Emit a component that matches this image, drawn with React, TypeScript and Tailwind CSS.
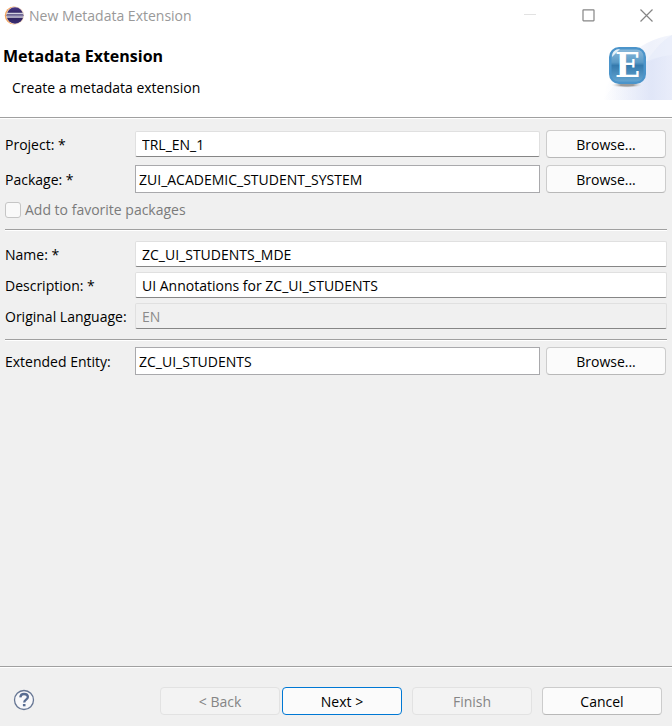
import { InputHTMLAttributes, ReactNode, useState } from "react";

const FIELD = "min-w-0 flex-1 text-black outline-none";
const NATIVE = "h-[26px] rounded-xs border border-[#e0e0e0] border-b-[#868686] bg-white px-1.5";
const BOXED = "h-7 border border-[#a9a9ac] bg-white px-[3px]";

interface FieldRowProps extends InputHTMLAttributes<HTMLInputElement> {
  id: string;
  label: string;
  boxed?: boolean;
  browse?: boolean;
}

function FieldRow({ id, label, boxed, browse, ...rest }: FieldRowProps) {
  return (
    <div className="flex items-center">
      <label htmlFor={id} className="w-[130px] shrink-0 pt-0.5 whitespace-nowrap">
        {label}
      </label>
      <input
        id={id}
        type="text"
        className={`${FIELD} ${boxed ? BOXED : NATIVE} disabled:bg-[#f0f0f0] disabled:text-[#8a8a8a]`}
        {...rest}
      />
      {browse && (
        <div className="ml-1.5 mr-px flex">
          <DialogButton>Browse...</DialogButton>
        </div>
      )}
    </div>
  );
}

function DialogButton({ children, primary, disabled }: { children: ReactNode; primary?: boolean; disabled?: boolean }) {
  return (
    <button
      type="button"
      disabled={disabled}
      className={`h-7 w-[120px] rounded-[4px] border pt-0.5 ${
        primary
          ? "border-[#0078d4] bg-[#fbfbfb] text-black"
          : disabled
            ? "border-[#e2e2e2] bg-[#f3f3f3] text-[#858585]"
            : "border-[#cccccc] border-b-[#b8b8b8] bg-[#fbfbfb] text-black"
      }`}
    >
      {children}
    </button>
  );
}

function Separator() {
  return <hr className="h-0.5 border-t border-b border-t-[#a0a0a0] border-b-white" />;
}

function EclipseLogo() {
  return (
    <svg width="20" height="20" viewBox="0 0 20 20" aria-hidden="true">
      <defs>
        <linearGradient id="orb" x1="0" x2="0" y1="0" y2="1">
          <stop offset="0" stopColor="#473788" />
          <stop offset="0.5" stopColor="#2c2255" />
          <stop offset="1" stopColor="#3a2d75" />
        </linearGradient>
      </defs>
      <circle cx="9.800" cy="9.500" r="9" fill="#f3a259" />
      <circle cx="11.200" cy="9.500" r="8.900" fill="#fbe3cd" />
      <circle cx="11" cy="9.500" r="8.300" fill="url(#orb)" />
      <path d="M2.500 7.500h17M2.500 11h17" stroke="#d3d1e0" strokeWidth="1.500" />
      <path d="M2.500 9.250h17" stroke="#7f78a3" strokeWidth="1.600" />
    </svg>
  );
}

function BannerImage() {
  return (
    <svg width="72" height="66" viewBox="0 0 72 66" aria-hidden="true">
      <defs>
        <linearGradient id="swoosh" x1="0" x2="1" y1="0" y2="0">
          <stop offset="0" stopColor="#dfe5f7" stopOpacity="0" />
          <stop offset="0.7" stopColor="#dae1f6" />
          <stop offset="1" stopColor="#e4e9f9" />
        </linearGradient>
        <linearGradient id="tile" x1="0" x2="0" y1="0" y2="1">
          <stop offset="0" stopColor="#8bb9da" />
          <stop offset="0.4" stopColor="#5b9ac6" />
          <stop offset="0.5" stopColor="#357aad" />
          <stop offset="1" stopColor="#64a4d0" />
        </linearGradient>
        <radialGradient id="shadow">
          <stop offset="0.4" stopColor="#9b9b9b" />
          <stop offset="1" stopColor="#ffffff" stopOpacity="0" />
        </radialGradient>
      </defs>
      <path d="M3 66C7 36 37 6 72 1v65z" fill="url(#swoosh)" opacity="0.45" />
      <path d="M3 66C20 40 42 24 72 21v45z" fill="url(#swoosh)" opacity="0.7" />
      <path d="M44 31C53 18 61 7 72 1v20c-10 1-19 5-28 10z" fill="#e4e9f9" opacity="0.5" />
      <ellipse cx="27" cy="51" rx="17" ry="3" fill="url(#shadow)" />
      <rect x="9" y="13" width="37" height="37" rx="10" fill="#4b94ca" />
      <rect x="11.500" y="15.500" width="32" height="32" rx="7" fill="url(#tile)" />
      <path d="M12 23c0-5 3-8 8-8l-4 4z" fill="#e6f1f8" />
      <text
        x="27.500"
        y="43"
        textAnchor="middle"
        fill="#fff"
        fontSize="33"
        fontWeight="700"
        className="font-['DejaVu_Serif',serif]"
      >
        E
      </text>
    </svg>
  );
}

export default function App() {
  const [favorite, setFavorite] = useState(false);

  return (
    <div className="flex min-h-screen flex-col bg-[#f0f0f0] font-['Open_Sans','Noto_Sans',sans-serif] text-[14px] leading-5 text-black">
      <header className="bg-white">
        <div className="flex h-[31px] items-center pl-1">
          <EclipseLogo />
          <span className="ml-[5px] flex-1 text-[#999999]">New Metadata Extension</span>
          <button type="button" aria-label="Minimize" disabled className="flex w-[52px] justify-center">
            <svg width="13" height="13" viewBox="0 0 13 13" stroke="#e2e2e2" aria-hidden="true">
              <path d="M0 5.500h12" />
            </svg>
          </button>
          <button type="button" aria-label="Maximize" className="flex w-16 justify-center">
            <svg width="13" height="13" viewBox="0 0 13 13" fill="none" stroke="#858585" aria-hidden="true">
              <rect x="1" y="0.800" width="11" height="11" rx="0.5" strokeWidth="1.200" />
            </svg>
          </button>
          <button type="button" aria-label="Close" className="flex w-[52px] justify-center">
            <svg width="13" height="13" viewBox="0 0 13 13" stroke="#858585" strokeWidth="1.200" aria-hidden="true">
              <path d="M0.500 0.500l12 12M12.500 0.500l-12 12" />
            </svg>
          </button>
        </div>
        <div className="flex h-[86px] items-start justify-between">
          <div className="pt-[15px] pl-[3px]">
            <h1 className="text-[16px] font-bold">Metadata Extension</h1>
            <p className="mt-3 pl-[9px]">Create a metadata extension</p>
          </div>
          <div className="pt-[3px]">
            <BannerImage />
          </div>
        </div>
      </header>
      <Separator />

      <main className="flex-1 px-[5px] pt-[11px]">
        <div className="space-y-[7px]">
          <FieldRow id="project" label="Project: *" defaultValue="TRL_EN_1" browse />
          <FieldRow id="package" label="Package: *" defaultValue="ZUI_ACADEMIC_STUDENT_SYSTEM" boxed browse />
          <label className="flex h-5 w-fit items-center text-[#7b7b7b]">
            <input
              type="checkbox"
              disabled
              checked={favorite}
              onChange={(e) => setFavorite(e.target.checked)}
              className="mr-1 size-4 appearance-none rounded-[3px] border border-[#c5c5c5] bg-[#f9f9f9]"
            />
            Add to favorite packages
          </label>
        </div>

        <div className="pt-[9px]">
          <Separator />
        </div>
        <div className="space-y-[5px] py-[10px]">
          <FieldRow id="name" label="Name: *" defaultValue="ZC_UI_STUDENTS_MDE" />
          <FieldRow id="description" label="Description: *" defaultValue="UI Annotations for ZC_UI_STUDENTS" />
          <FieldRow id="language" label="Original Language:" defaultValue="EN" disabled />
        </div>
        <Separator />
        <div className="pt-1.5">
          <FieldRow id="entity" label="Extended Entity:" defaultValue="ZC_UI_STUDENTS" boxed browse />
        </div>
      </main>

      <footer>
        <Separator />
        <div className="flex h-[58px] items-center pt-1.5 pr-[10px] pl-[13px]">
          <button type="button" aria-label="Help" className="mr-auto">
            <svg width="22" height="22" viewBox="0 0 22 22" fill="none" aria-hidden="true">
              <circle cx="11" cy="11" r="9.500" fill="#f8f8fa" stroke="#667694" strokeWidth="1.300" />
              <path
                d="M7.300 8.300C7.600 5.900 9 5 11 5c2.300 0 3.900 1.200 3.900 3.100 0 2.600-3.700 2.600-3.700 5.400"
                stroke="#586c91"
                strokeWidth="2.300"
              />
              <path d="M9.900 15h2.600v2.300H9.900z" fill="#586c91" />
            </svg>
          </button>
          <div className="flex gap-0.5 pt-0.5">
            <DialogButton disabled>&lt; Back</DialogButton>
            <DialogButton primary>Next &gt;</DialogButton>
          </div>
          <div className="ml-[10px] flex gap-[10px] pt-0.5">
            <DialogButton disabled>Finish</DialogButton>
            <DialogButton>Cancel</DialogButton>
          </div>
        </div>
      </footer>
    </div>
  );
}
